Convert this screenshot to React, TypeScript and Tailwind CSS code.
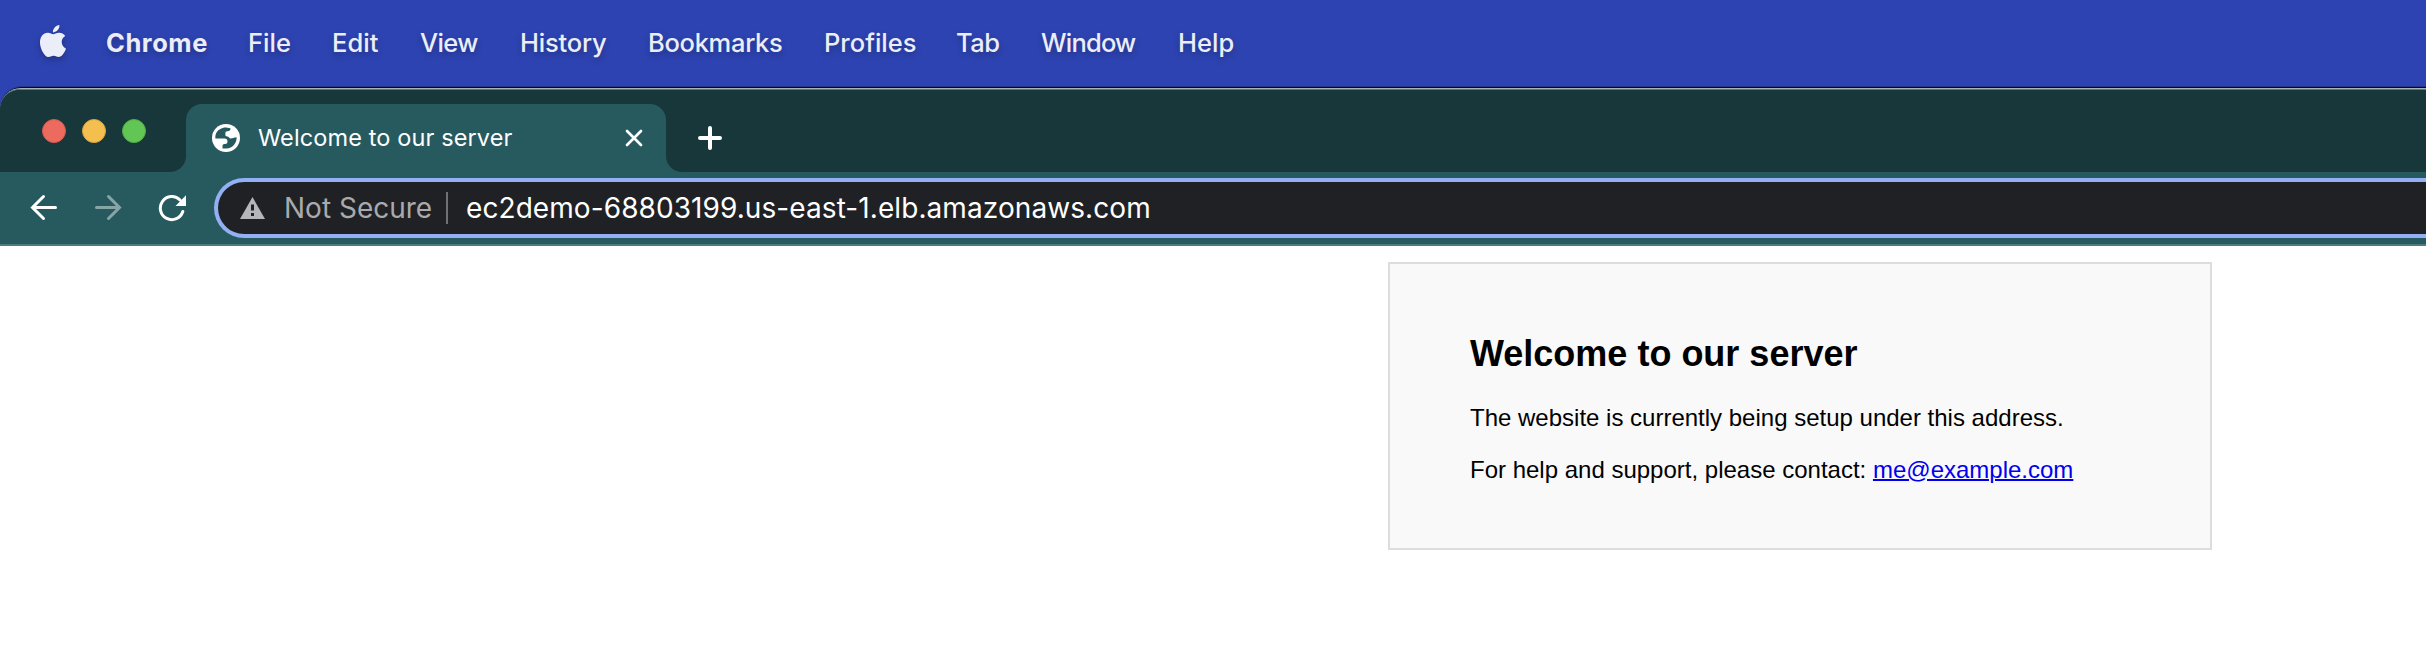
import type { ReactNode } from "react";
import { SiApple } from "react-icons/si";

type MenuItem = { label: string; className: string };

// Each entry reserves a fixed slot so the labels keep an even rhythm.
const menuItems: MenuItem[] = [
  { label: "Chrome", className: "w-[142px] font-bold tracking-[0.55px]" },
  { label: "File", className: "w-[84px]" },
  { label: "Edit", className: "w-[88px] tracking-[0.1px]" },
  { label: "View", className: "w-[100px] tracking-[-0.6px]" },
  { label: "History", className: "w-[128px] tracking-[-0.2px]" },
  { label: "Bookmarks", className: "w-[176px] tracking-[-0.3px]" },
  { label: "Profiles", className: "w-[132px]" },
  { label: "Tab", className: "w-[85px] tracking-[-0.5px]" },
  { label: "Window", className: "w-[137px] tracking-[-0.8px]" },
  { label: "Help", className: "w-[70px]" },
];

function MenuBar() {
  return (
    <header className="flex h-[86px] items-center bg-[#2d43b1] pl-[37px] text-[25.5px] leading-8 font-medium text-[#ebedf8] [text-shadow:0_3px_6px_rgba(0,0,0,0.25)]">
      <SiApple className="mr-[37px] mb-[4px] size-8 shrink-0 drop-shadow-[0_3px_3px_rgba(0,0,0,0.25)]" />
      {menuItems.map((item) => (
        <span key={item.label} className={`shrink-0 ${item.className}`}>
          {item.label}
        </span>
      ))}
    </header>
  );
}

function TrafficLights() {
  return (
    <div className="mt-[29px] flex w-[128px] gap-4">
      <span className="size-6 rounded-full border border-[#d8584d] bg-[#ed6a5e]" />
      <span className="size-6 rounded-full border border-[#d9a53f] bg-[#f5bf4f]" />
      <span className="size-6 rounded-full border border-[#52ab43] bg-[#62c655]" />
    </div>
  );
}

function GlobeIcon() {
  return (
    <svg viewBox="0 0 28 28" className="size-7">
      <circle cx="14" cy="14" r="14" fill="#fff" />
      <path
        d="M4 9.500C5.700 6 9.500 3.500 14 3.500L18.500 4.200C18.500 6.500 17.500 7.200 15.500 7.200C13.800 7.200 13.400 8 13.400 9.300V11C13.400 12 14.200 12.400 15.200 12.400C17 12.400 17.200 14.400 18.800 14.400C20.500 14.400 22 13.300 24.600 13.200C24.900 19 20.500 24.300 14.500 24.600H10.500V22C10.500 20.500 11.500 20 13 20C14.500 20 15.500 19.200 15.500 17.500C15.500 15.500 14.500 14.400 12.500 14.400H3.400C3.300 12.500 3.400 11 4 9.500Z"
        fill="#265a5f"
      />
    </svg>
  );
}

function CurvedCorner({ side }: { side: "left" | "right" }) {
  return (
    <svg viewBox="0 0 16 16" className="size-4 self-end">
      <path d={side === "left" ? "M16 0V16H0A16 16 0 0 0 16 0Z" : "M0 0V16H16A16 16 0 0 1 0 0Z"} fill="#265a5f" />
    </svg>
  );
}

function TabStrip() {
  return (
    <div className="flex h-[82px] items-stretch rounded-tl-[20px] bg-[#17373b] pl-[42px]">
      <TrafficLights />
      <CurvedCorner side="left" />
      <div className="mt-[14px] flex w-[480px] items-center rounded-t-2xl bg-[#265a5f] pr-[23px] pl-[26px]">
        <GlobeIcon />
        <span className="ml-[18px] flex-1 text-[23.5px] leading-8 tracking-[0.12px] text-white">
          Welcome to our server
        </span>
        <svg viewBox="0 0 18 18" className="size-[18px]" stroke="#fff" strokeWidth="2.7" strokeLinecap="round">
          <path d="M2 2 16 16M16 2 2 16" />
        </svg>
      </div>
      <CurvedCorner side="right" />
      <svg
        viewBox="0 0 24 24"
        className="mt-[36px] ml-4 size-6"
        stroke="#fff"
        strokeWidth="4"
        strokeLinecap="round"
      >
        <path d="M12 2V22M2 12H22" />
      </svg>
    </div>
  );
}

function ToolbarIcon({ className, children }: { className?: string; children: ReactNode }) {
  return (
    <svg
      viewBox="0 0 28 28"
      className={`size-7 shrink-0 ${className ?? ""}`}
      fill="none"
      stroke="#fff"
      strokeWidth="3"
      strokeLinecap="round"
    >
      {children}
    </svg>
  );
}

function AddressBar() {
  return (
    <div className="flex h-[60px] flex-1 items-center rounded-l-full border-4 border-r-0 border-[#93b0f4] bg-[#202125] pl-[22px] text-[28px] leading-9">
      <svg viewBox="0 0 25 22" className="h-[22px] w-[25px]">
        <path d="M12.500 0 25 22H0Z" fill="#b4b6ba" />
        <path d="M11 7.500h3v6h-3zM11 16h3v3h-3z" fill="#202125" />
      </svg>
      <span className="ml-[19px] w-[162px] text-[#a8aaad]">Not Secure</span>
      <span className="h-8 w-0.5 bg-[#6f7174]" />
      <span className="ml-[18px] tracking-[0.08px] text-white">ec2demo-68803199.us-east-1.elb.amazonaws.com</span>
    </div>
  );
}

function Toolbar() {
  return (
    <div className="flex h-[74px] items-center border-b-2 border-[#4b7b80] bg-[#265a5f] pl-[30px]">
      <ToolbarIcon>
        <path d="M2.500 13.500H25.500M13.500 2.500 2.500 13.500 13.500 24.500" />
      </ToolbarIcon>
      <ToolbarIcon className="ml-9 opacity-45">
        <path d="M2.500 13.500H25.500M14.500 2.500 25.500 13.500 14.500 24.500" />
      </ToolbarIcon>
      <ToolbarIcon className="ml-9">
        <path d="M24.800 17.500A11.500 11.500 0 1 1 22 6" />
        <path d="M28 1.200V12H17.500Z" fill="#fff" stroke="none" />
      </ToolbarIcon>
      <div className="ml-[28px] flex flex-1">
        <AddressBar />
      </div>
    </div>
  );
}

function WelcomePage() {
  return (
    <main className="h-[410px] bg-white pt-4 pl-[1388px] font-['Liberation_Sans',Arial,sans-serif] text-black">
      <section className="h-[288px] w-[824px] border-2 border-[#dddddd] bg-[#f9f9f9] px-20 pt-[69px]">
        <h1 className="text-[36px] leading-[41px] font-bold">Welcome to our server</h1>
        <p className="mt-[30px] text-[24px] leading-7">The website is currently being setup under this address.</p>
        <p className="mt-6 text-[24px] leading-7">
          For help and support, please contact:{" "}
          <a href="mailto:me@example.com" className="text-[#0000ee] underline decoration-2">
            me@example.com
          </a>
        </p>
      </section>
    </main>
  );
}

export default function App() {
  return (
    <div className="h-[656px] w-full overflow-hidden bg-[#2d43b1] font-[Inter,sans-serif]">
      <MenuBar />
      <div className="rounded-tl-[22px] border-t border-[#24358a]">
        <div className="rounded-tl-[22px] border-t border-[#05080c]">
          <div className="rounded-tl-[21px] border-t border-[#a9b3b2] bg-[#17373b]">
            <div className="rounded-tl-[20px] border-t border-[#5e7573]">
              <TabStrip />
            </div>
          </div>
        </div>
      </div>
      <Toolbar />
      <WelcomePage />
    </div>
  );
}
